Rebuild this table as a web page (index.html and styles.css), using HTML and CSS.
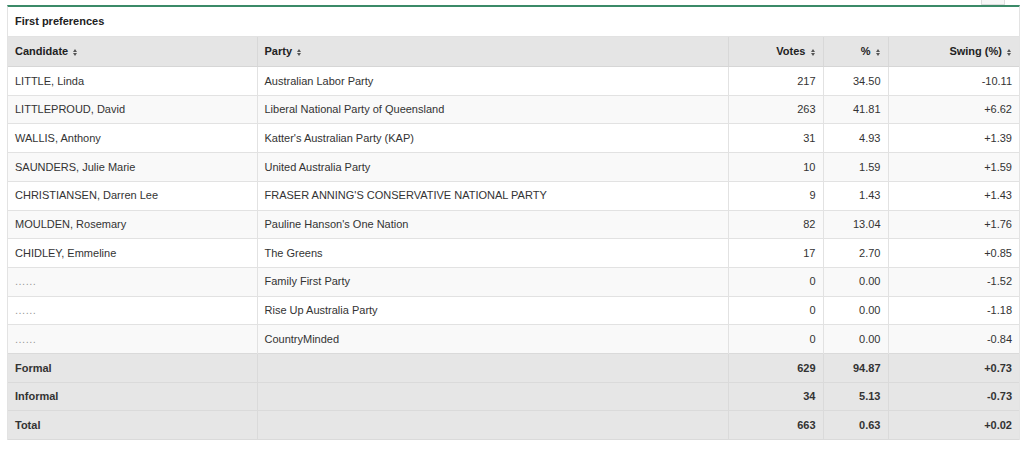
FILE: index.html
```html
<!DOCTYPE html>
<html>
<head>
<meta charset="utf-8">
<link rel="stylesheet" href="styles.css">
</head>
<body>
<div class="page">
  <div class="topstrip"><div class="tabstub"></div></div>
  <div class="panel">
    <div class="panel-title">First preferences</div>
    <table class="results">
      <colgroup>
        <col class="c-cand"><col class="c-party"><col class="c-votes"><col class="c-pct"><col class="c-swing">
      </colgroup>
      <thead>
        <tr>
          <th>Candidate <span class="sort"></span></th>
          <th>Party <span class="sort"></span></th>
          <th class="num">Votes <span class="sort"></span></th>
          <th class="num">% <span class="sort"></span></th>
          <th class="num">Swing (%) <span class="sort"></span></th>
        </tr>
      </thead>
      <tbody>
        <tr><td>LITTLE, Linda</td><td>Australian Labor Party</td><td class="num">217</td><td class="num">34.50</td><td class="num">-10.11</td></tr>
        <tr><td>LITTLEPROUD, David</td><td>Liberal National Party of Queensland</td><td class="num">263</td><td class="num">41.81</td><td class="num">+6.62</td></tr>
        <tr><td>WALLIS, Anthony</td><td>Katter's Australian Party (KAP)</td><td class="num">31</td><td class="num">4.93</td><td class="num">+1.39</td></tr>
        <tr><td>SAUNDERS, Julie Marie</td><td>United Australia Party</td><td class="num">10</td><td class="num">1.59</td><td class="num">+1.59</td></tr>
        <tr><td>CHRISTIANSEN, Darren Lee</td><td>FRASER ANNING'S CONSERVATIVE NATIONAL PARTY</td><td class="num">9</td><td class="num">1.43</td><td class="num">+1.43</td></tr>
        <tr><td>MOULDEN, Rosemary</td><td>Pauline Hanson's One Nation</td><td class="num">82</td><td class="num">13.04</td><td class="num">+1.76</td></tr>
        <tr><td>CHIDLEY, Emmeline</td><td>The Greens</td><td class="num">17</td><td class="num">2.70</td><td class="num">+0.85</td></tr>
        <tr><td class="dots">......</td><td>Family First Party</td><td class="num">0</td><td class="num">0.00</td><td class="num">-1.52</td></tr>
        <tr><td class="dots">......</td><td>Rise Up Australia Party</td><td class="num">0</td><td class="num">0.00</td><td class="num">-1.18</td></tr>
        <tr><td class="dots">......</td><td>CountryMinded</td><td class="num">0</td><td class="num">0.00</td><td class="num">-0.84</td></tr>
      </tbody>
      <tfoot>
        <tr><td>Formal</td><td></td><td class="num">629</td><td class="num">94.87</td><td class="num">+0.73</td></tr>
        <tr><td>Informal</td><td></td><td class="num">34</td><td class="num">5.13</td><td class="num">-0.73</td></tr>
        <tr><td>Total</td><td></td><td class="num">663</td><td class="num">0.63</td><td class="num">+0.02</td></tr>
      </tfoot>
    </table>
  </div>
</div>
</body>
</html>
```
FILE: styles.css
```css
html, body {
  margin: 0;
  padding: 0;
  background: #fff;
}
body {
  font-family: "Liberation Sans", Arial, sans-serif;
  font-size: 11px;
  color: #333;
}
.page {
  width: 1013px;
  padding-left: 7px;
}
.topstrip {
  height: 5px;
  display: flex;
  justify-content: flex-end;
  padding-right: 15px;
}
.tabstub {
  width: 24px;
  height: 5px;
  box-sizing: border-box;
  border: 1px solid #ddd;
  border-top: none;
  background: #f7f7f7;
}
.panel {
  border-top: 2px solid #3b8a68;
  border-left: 1px solid #e3e3e3;
  border-right: 1px solid #e3e3e3;
}
.panel-title {
  height: 29px;
  line-height: 29px;
  padding-left: 7px;
  font-weight: bold;
  font-size: 11px;
  color: #222;
}
.results {
  width: 100%;
  border-collapse: collapse;
  table-layout: fixed;
}
.c-cand { width: 249px; }
.c-party { width: 471px; }
.c-votes { width: 95px; }
.c-pct { width: 65px; }
.c-swing { width: auto; }
.results th,
.results td {
  padding: 6.5px 7px;
  height: 14.7px;
  line-height: 14.7px;
  text-align: left;
  border-top: 1px solid #e2e2e2;
  border-left: 1px solid #e2e2e2;
  white-space: nowrap;
  overflow: hidden;
}
.results th:first-child,
.results td:first-child {
  border-left: none;
  padding-left: 7px;
}
.results thead th {
  padding-top: 7px;
  padding-bottom: 7px;
  background: #e5e5e5;
  font-weight: bold;
  font-size: 11px;
  color: #222;
  height: 15px;
  border-bottom: 1px solid #d6d6d6;
  border-left-color: #d8d8d8;
}
.results tbody tr:nth-child(odd) td { background: #fff; }
.results tbody tr:nth-child(even) td { background: #f9f9f9; }
.results tfoot td {
  background: #e6e6e6;
  font-weight: bold;
  font-size: 11px;
  color: #333;
  border-top-color: #dadada;
  border-left-color: #dadada;
}
.results tfoot tr:last-child td {
  border-bottom: 1px solid #dadada;
}
.results .num { text-align: right; }
.dots { color: #999; letter-spacing: 0.5px; }
.sort {
  display: inline-block;
  width: 5px;
  height: 7px;
  margin-left: 2px;
  vertical-align: -1px;
  position: relative;
}
.sort::before,
.sort::after {
  content: "";
  position: absolute;
  left: 0;
  border-left: 2.5px solid transparent;
  border-right: 2.5px solid transparent;
}
.sort::before {
  top: 0;
  border-bottom: 3px solid #555;
}
.sort::after {
  bottom: 0;
  border-top: 3px solid #555;
}
```
